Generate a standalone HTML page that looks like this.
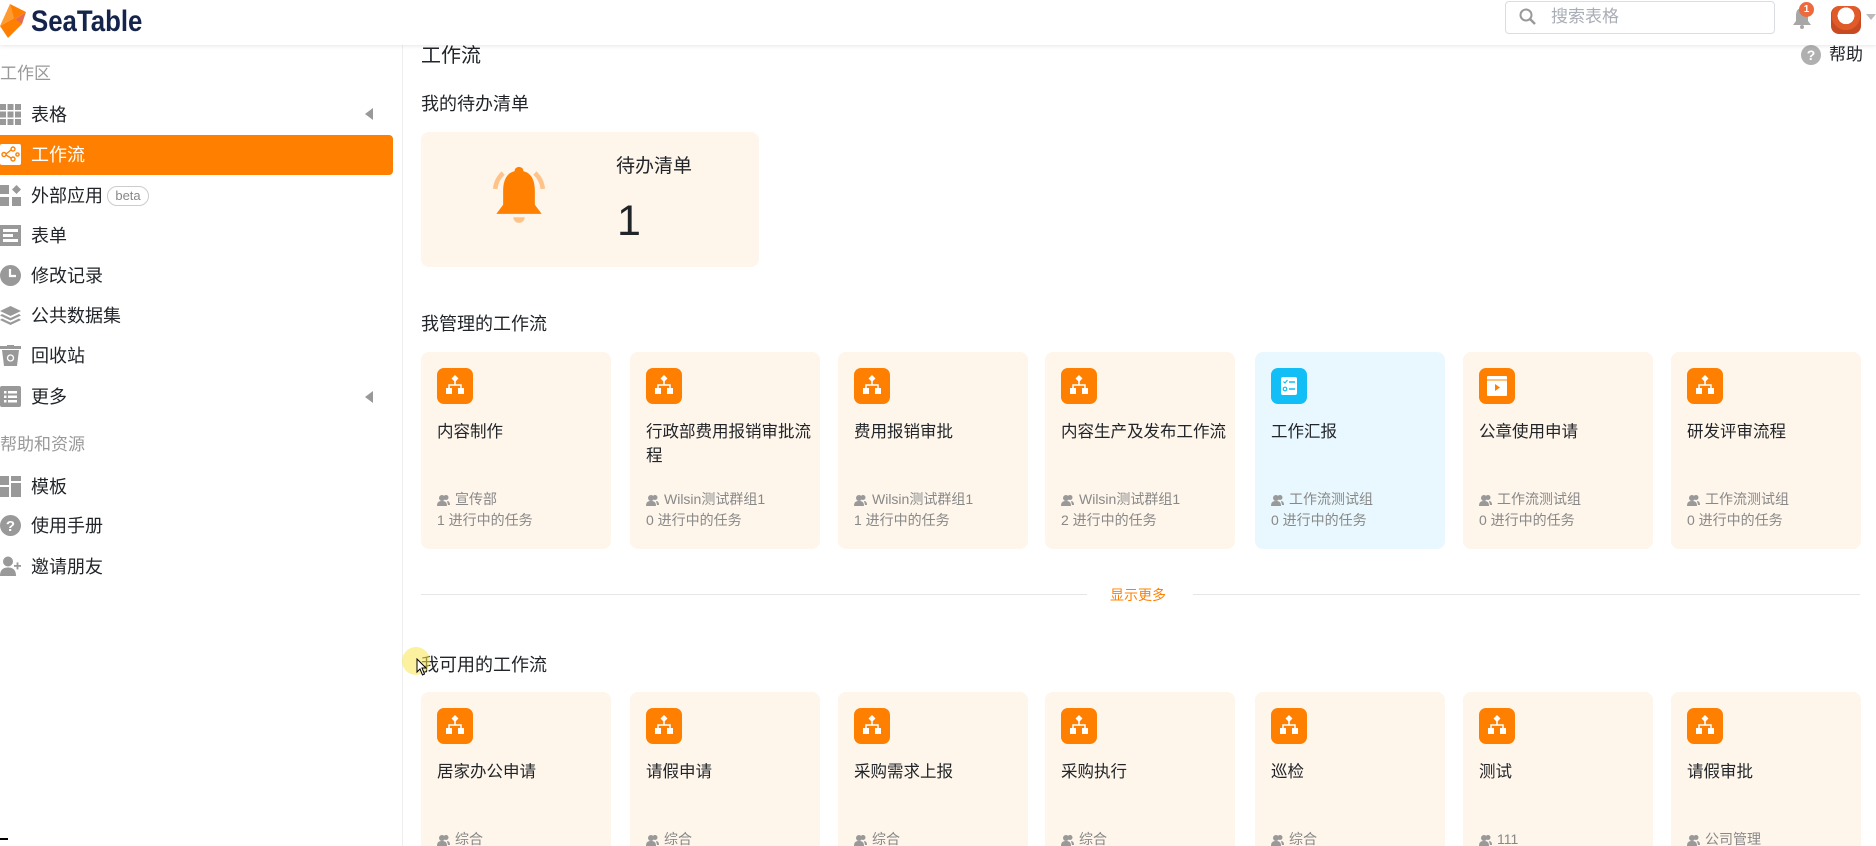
<!DOCTYPE html>
<html style="height:846px;overflow:hidden"><head><meta charset="utf-8">
<style>
*{margin:0;padding:0;box-sizing:border-box}
body{width:1876px;height:846px;overflow:hidden;background:#fff;font-family:"Liberation Sans","Noto Sans CJK SC",sans-serif;color:#212529;position:relative}
.a{position:absolute;white-space:nowrap}
.hdr{position:absolute;left:0;top:0;width:1876px;height:45px;background:#fff;box-shadow:0 1px 4px rgba(0,0,0,.1);z-index:5}
.side{position:absolute;left:0;top:45px;width:403px;height:801px;border-right:1px solid #eee}
.si{position:absolute;left:31px;font-size:18px;line-height:24px;color:#212529}
.sl{position:absolute;left:0;font-size:17px;color:#999;line-height:24px}
.ic{position:absolute;left:0;width:21px;height:21px}
.h2{position:absolute;left:421px;font-size:18px;line-height:24px;color:#212529}
.card{position:absolute;width:190px;height:197px;background:#fef5eb;border-radius:8px;overflow:hidden}
.card .i{position:absolute;left:16px;top:16px;width:36px;height:36px;border-radius:7px;background:#ff8000}
.card .t{position:absolute;left:16px;top:68px;font-size:16.5px;line-height:24px;color:#212529;width:170px;white-space:normal}
.card .g{position:absolute;left:16px;top:137px;font-size:14px;color:#888;line-height:20px;white-space:nowrap}
.card .k{position:absolute;left:16px;top:158px;font-size:14px;color:#888;line-height:20px}
.card .g svg{vertical-align:-2px;margin-right:5px}
.clip{position:absolute;left:0;top:0;width:1876px;height:846px;overflow:hidden}
</style></head><body><div class="clip">

<div class="hdr">
  <svg class="a" style="left:0;top:4px" width="28" height="34" viewBox="0 0 28 34"><path d="M10 0 L26 8 L14 16 Z" fill="#ff8000"/><path d="M14 16 L26 8 L22 20 Z" fill="#e56b50"/><path d="M0 22 L14 14 L22 20 L8 34 Z" fill="#ff8000"/><path d="M0 22 L10 0 L14 14Z" fill="#ff9a33"/></svg>
  <div class="a" style="left:31px;top:3px;font-size:30px;font-weight:bold;color:#14244a;line-height:38px;transform:scaleX(0.86);transform-origin:left center">SeaTable</div>
  <div class="a" style="left:1505px;top:1px;width:270px;height:33px;border:1px solid #dcdde3;border-radius:4px"></div>
  <svg class="a" style="left:1519px;top:8px" width="18" height="18" viewBox="0 0 18 18"><circle cx="7" cy="7" r="5.5" fill="none" stroke="#999" stroke-width="2"/><path d="M11 11 L16 16" stroke="#999" stroke-width="2.4"/></svg>
  <div class="a" style="left:1551px;top:6px;font-size:17px;color:#a9adb5;line-height:22px">搜索表格</div>
  <svg class="a" style="left:1792px;top:6px" width="20" height="24" viewBox="0 0 20 24"><path d="M10 2 C5 2 4 6 4 10 L4 15 L1 19 L19 19 L16 15 L16 10 C16 6 15 2 10 2Z" fill="#a7a7a7"/><circle cx="10" cy="21" r="2" fill="#a7a7a7"/></svg>
  <div class="a" style="left:1799px;top:2px;width:15px;height:15px;border-radius:50%;background:#ec6a3d;color:#fff;font-size:10px;line-height:15px;text-align:center;font-weight:bold">1</div>
  <div class="a" style="left:1831px;top:6px;width:30px;height:28px;border-radius:8px;background:radial-gradient(circle at 50% 35%,#fff 0 35%,#e05a2a 36% 60%,#c84a20 61%)"></div>
  <svg class="a" style="left:1866px;top:14px" width="10" height="8"><path d="M0 0 L10 0 L5 6Z" fill="#bbb"/></svg>
</div>

<div class="side">
  <div class="sl" style="top:17px">工作区</div>
  <svg class="ic" style="top:59px" viewBox="0 0 21 21" fill="#999"><rect x="0" y="0" width="6" height="6"/><rect x="7.5" y="0" width="6" height="6"/><rect x="15" y="0" width="6" height="6"/><rect x="0" y="7.5" width="6" height="6"/><rect x="7.5" y="7.5" width="6" height="6"/><rect x="15" y="7.5" width="6" height="6"/><rect x="0" y="15" width="6" height="6"/><rect x="7.5" y="15" width="6" height="6"/><rect x="15" y="15" width="6" height="6"/></svg>
  <div class="si" style="top:58px">表格</div>
  <svg class="a" style="left:365px;top:63px" width="8" height="12"><path d="M8 0 L0 6 L8 12Z" fill="#999"/></svg>
  <div class="a" style="left:0;top:90px;width:393px;height:40px;background:#ff8000;border-radius:0 4px 4px 0"></div>
  <svg class="ic" style="top:99px" viewBox="0 0 21 21"><rect width="21" height="21" rx="2" fill="#fff"/><g fill="none" stroke="#ff8000" stroke-width="1.4"><circle cx="4" cy="10.5" r="2"/><circle cx="13" cy="5" r="2"/><circle cx="13" cy="15" r="2"/><circle cx="17.5" cy="10.5" r="1.6"/><path d="M6 10 L11 6 M6 11 L11 14"/></g></svg>
  <div class="si" style="top:98px;color:#fff">工作流</div>
  <svg class="ic" style="top:140px" viewBox="0 0 21 21" fill="#999"><rect x="0" y="0" width="9" height="9"/><rect x="0" y="12" width="9" height="9"/><rect x="12" y="12" width="9" height="9"/><path d="M16.5 0 L21 4.5 L16.5 9 L12 4.5Z"/></svg>
  <div class="si" style="top:139px">外部应用</div>
  <div class="a" style="left:107px;top:141px;width:42px;height:20px;border:1px solid #ccc;border-radius:10px;font-size:13px;color:#888;text-align:center;line-height:18px">beta</div>
  <svg class="ic" style="top:180px" viewBox="0 0 21 21"><rect width="21" height="21" fill="#999"/><rect x="3" y="4" width="15" height="3" fill="#fff"/><rect x="3" y="9" width="10" height="3" fill="#fff"/><rect x="3" y="14" width="15" height="3" fill="#fff"/></svg>
  <div class="si" style="top:179px">表单</div>
  <svg class="ic" style="top:220px" viewBox="0 0 21 21"><circle cx="10.5" cy="10.5" r="10.5" fill="#999"/><path d="M10 4 L10 11 L16 11" stroke="#fff" stroke-width="2.2" fill="none"/></svg>
  <div class="si" style="top:219px">修改记录</div>
  <svg class="ic" style="top:260px" viewBox="0 0 21 21" fill="#999"><path d="M10.5 1 L21 6 L10.5 11 L0 6Z"/><path d="M2 9 L10.5 13 L19 9 L21 10.5 L10.5 15.5 L0 10.5Z"/><path d="M2 13.5 L10.5 17.5 L19 13.5 L21 15 L10.5 20 L0 15Z"/></svg>
  <div class="si" style="top:259px">公共数据集</div>
  <svg class="ic" style="top:300px" viewBox="0 0 21 21" fill="#999"><rect x="0" y="1" width="21" height="3"/><rect x="7" y="0" width="7" height="2"/><path d="M2 5 L19 5 L17 21 L4 21Z"/><circle cx="10.5" cy="13" r="3" fill="none" stroke="#fff" stroke-width="1.3"/></svg>
  <div class="si" style="top:299px">回收站</div>
  <svg class="ic" style="top:341px" viewBox="0 0 21 21"><rect width="21" height="21" rx="2" fill="#999"/><g fill="#fff"><rect x="4" y="5" width="2.5" height="2.5"/><rect x="8" y="5" width="9" height="2.5"/><rect x="4" y="9.5" width="2.5" height="2.5"/><rect x="8" y="9.5" width="9" height="2.5"/><rect x="4" y="14" width="2.5" height="2.5"/><rect x="8" y="14" width="9" height="2.5"/></g></svg>
  <div class="si" style="top:340px">更多</div>
  <svg class="a" style="left:365px;top:346px" width="8" height="12"><path d="M8 0 L0 6 L8 12Z" fill="#999"/></svg>
  <div class="sl" style="top:388px">帮助和资源</div>
  <svg class="ic" style="top:431px" viewBox="0 0 21 21" fill="#999"><rect x="0" y="0" width="9" height="9"/><rect x="0" y="11" width="9" height="10"/><rect x="11" y="0" width="10" height="5"/><rect x="11" y="7" width="10" height="14"/></svg>
  <div class="si" style="top:430px">模板</div>
  <svg class="ic" style="top:470px" viewBox="0 0 21 21"><circle cx="10.5" cy="10.5" r="10.5" fill="#999"/><text x="10.5" y="16" font-size="15" font-weight="bold" fill="#fff" text-anchor="middle" font-family="Liberation Sans">?</text></svg>
  <div class="si" style="top:469px">使用手册</div>
  <svg class="ic" style="top:511px" viewBox="0 0 21 21" fill="#999"><circle cx="8" cy="5.5" r="5"/><path d="M0 20 C0 13 4 11.5 8 11.5 C12 11.5 16 13 16 20Z"/><rect x="14" y="9" width="7" height="1.8"/><rect x="16.6" y="6.4" width="1.8" height="7"/></svg>
  <div class="si" style="top:510px">邀请朋友</div>
</div>

<div class="a" style="left:421px;top:44px;font-size:20px;line-height:24px;color:#212529">工作流</div>
<div class="a" style="left:1801px;top:45px;width:20px;height:20px;border-radius:50%;background:#b0b0b0;color:#fff;font-size:14px;font-weight:bold;text-align:center;line-height:20px">?</div>
<div class="a" style="left:1829px;top:43px;font-size:17px;line-height:24px">帮助</div>

<div class="h2" style="top:92px">我的待办清单</div>
<div class="a" style="left:421px;top:132px;width:338px;height:135px;background:#fef5eb;border-radius:8px"></div>
<svg class="a" style="left:485px;top:166px" width="68" height="64" viewBox="0 0 60 56"><path d="M9 20 A22 22 0 0 1 16 6" stroke="#ffc38a" stroke-width="4" fill="none"/><path d="M51 20 A22 22 0 0 0 44 6" stroke="#ffc38a" stroke-width="4" fill="none"/><circle cx="30" cy="4.5" r="4" fill="#ff8000"/><path d="M30 4 C18 4 16 14 16 22 L16 34 L10 42 L50 42 L44 34 L44 22 C44 14 42 4 30 4Z" fill="#ff8000"/><path d="M25 45 A5 5 0 0 0 35 45Z" fill="#ffc38a"/></svg>
<div class="a" style="left:616px;top:155px;font-size:19px;line-height:24px">待办清单</div>
<div class="a" style="left:617px;top:198px;font-size:43px;line-height:46px;font-weight:300">1</div>

<div class="h2" style="top:312px">我管理的工作流</div>

<svg width="0" height="0" style="position:absolute"><defs>
<g id="fl"><path d="M18 7 L21.5 10.5 L18 14 L14.5 10.5Z" fill="#fff"/><path d="M18 13 L18 17 M12 20 L12 17 L24 17 L24 20" stroke="#fff" stroke-width="1.5" fill="none"/><rect x="9" y="20" width="6" height="6" fill="#fff"/><rect x="21" y="20" width="6" height="6" fill="#fff"/></g>
<g id="us"><circle cx="5" cy="4" r="3" fill="#999"/><path d="M0 12 C0 8 2 7 5 7 C8 7 10 8 10 12Z" fill="#999"/><circle cx="9" cy="3.5" r="2.5" fill="#999"/><path d="M10 7 C12 7 13 8.5 13 11 L11 11Z" fill="#999"/></g>
</defs></svg>

<div class="card" style="left:421px;top:352px"><svg class="i" viewBox="0 0 36 36"><use href="#fl"/></svg><div class="t">内容制作</div><div class="g"><svg width="13" height="12"><use href="#us"/></svg>宣传部</div><div class="k">1 进行中的任务</div></div>
<div class="card" style="left:630px;top:352px"><svg class="i" viewBox="0 0 36 36"><use href="#fl"/></svg><div class="t">行政部费用报销审批流程</div><div class="g"><svg width="13" height="12"><use href="#us"/></svg>Wilsin测试群组1</div><div class="k">0 进行中的任务</div></div>
<div class="card" style="left:838px;top:352px"><svg class="i" viewBox="0 0 36 36"><use href="#fl"/></svg><div class="t">费用报销审批</div><div class="g"><svg width="13" height="12"><use href="#us"/></svg>Wilsin测试群组1</div><div class="k">1 进行中的任务</div></div>
<div class="card" style="left:1045px;top:352px"><svg class="i" viewBox="0 0 36 36"><use href="#fl"/></svg><div class="t">内容生产及发布工作流</div><div class="g"><svg width="13" height="12"><use href="#us"/></svg>Wilsin测试群组1</div><div class="k">2 进行中的任务</div></div>
<div class="card" style="left:1255px;top:352px;background:#e9f8fe"><svg class="i" viewBox="0 0 36 36" style="background:#12bef6"><rect x="10" y="9" width="16" height="18" rx="2" fill="#fff"/><path d="M12.5 13.5 L14 15 L16.5 12" stroke="#12bef6" stroke-width="1.2" fill="none"/><circle cx="14" cy="21" r="1.8" stroke="#12bef6" stroke-width="1.2" fill="none"/><path d="M18 14 L24 14 M18 21 L24 21" stroke="#12bef6" stroke-width="1.4"/></svg><div class="t">工作汇报</div><div class="g"><svg width="13" height="12"><use href="#us"/></svg>工作流测试组</div><div class="k">0 进行中的任务</div></div>
<div class="card" style="left:1463px;top:352px"><svg class="i" viewBox="0 0 36 36"><rect x="8" y="8" width="20" height="20" rx="1" fill="#fff"/><path d="M8 12 L28 12" stroke="#ff8000" stroke-width="1"/><path d="M16 16 L21 19.5 L16 23Z" fill="#ff8000"/></svg><div class="t">公章使用申请</div><div class="g"><svg width="13" height="12"><use href="#us"/></svg>工作流测试组</div><div class="k">0 进行中的任务</div></div>
<div class="card" style="left:1671px;top:352px"><svg class="i" viewBox="0 0 36 36"><use href="#fl"/></svg><div class="t">研发评审流程</div><div class="g"><svg width="13" height="12"><use href="#us"/></svg>工作流测试组</div><div class="k">0 进行中的任务</div></div>

<div class="a" style="left:421px;top:594px;width:666px;height:1px;background:#e6e6e6"></div>
<div class="a" style="left:1193px;top:594px;width:667px;height:1px;background:#e6e6e6"></div>
<div class="a" style="left:1110px;top:585px;font-size:14px;color:#ff8000;line-height:20px">显示更多</div>

<div class="h2" style="top:653px">我可用的工作流</div>
<div class="a" style="left:402px;top:647px;width:28px;height:28px;border-radius:50%;background:rgba(250,230,80,.55)"></div>
<svg class="a" style="left:416px;top:658px" width="12" height="18" viewBox="0 0 12 18"><path d="M1 1 L1 14 L4 11 L6.5 17 L8.5 16 L6 10 L10 10Z" fill="#fff" stroke="#000" stroke-width="1"/></svg>

<div class="card" style="left:421px;top:692px"><svg class="i" viewBox="0 0 36 36"><use href="#fl"/></svg><div class="t">居家办公申请</div><div class="g"><svg width="13" height="12"><use href="#us"/></svg>综合</div></div>
<div class="card" style="left:630px;top:692px"><svg class="i" viewBox="0 0 36 36"><use href="#fl"/></svg><div class="t">请假申请</div><div class="g"><svg width="13" height="12"><use href="#us"/></svg>综合</div></div>
<div class="card" style="left:838px;top:692px"><svg class="i" viewBox="0 0 36 36"><use href="#fl"/></svg><div class="t">采购需求上报</div><div class="g"><svg width="13" height="12"><use href="#us"/></svg>综合</div></div>
<div class="card" style="left:1045px;top:692px"><svg class="i" viewBox="0 0 36 36"><use href="#fl"/></svg><div class="t">采购执行</div><div class="g"><svg width="13" height="12"><use href="#us"/></svg>综合</div></div>
<div class="card" style="left:1255px;top:692px"><svg class="i" viewBox="0 0 36 36"><use href="#fl"/></svg><div class="t">巡检</div><div class="g"><svg width="13" height="12"><use href="#us"/></svg>综合</div></div>
<div class="card" style="left:1463px;top:692px"><svg class="i" viewBox="0 0 36 36"><use href="#fl"/></svg><div class="t">测试</div><div class="g"><svg width="13" height="12"><use href="#us"/></svg>111</div></div>
<div class="card" style="left:1671px;top:692px"><svg class="i" viewBox="0 0 36 36"><use href="#fl"/></svg><div class="t">请假审批</div><div class="g"><svg width="13" height="12"><use href="#us"/></svg>公司管理</div></div>

<div class="a" style="left:0;top:838px;width:8px;height:2px;background:#000"></div>
</div></body></html>
